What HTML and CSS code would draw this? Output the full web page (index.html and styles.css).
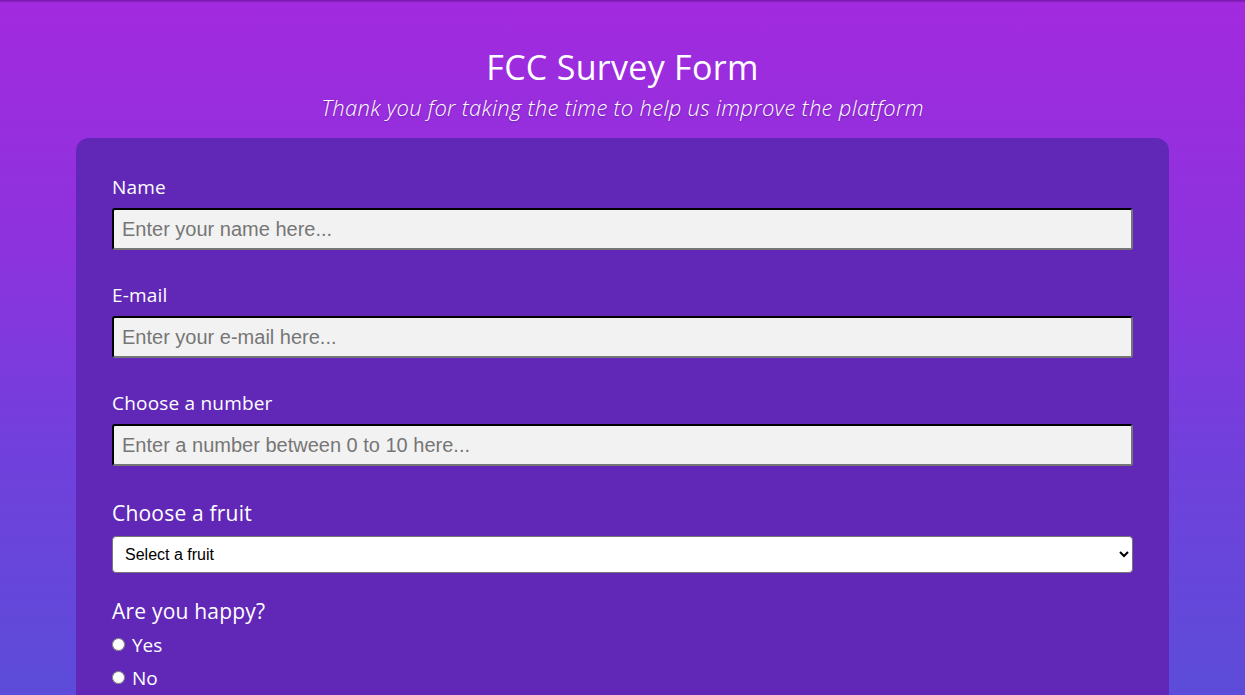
FILE: index.html
```html
<!DOCTYPE html>
<html lang="en">
<head>
<meta charset="utf-8">
<title>FCC Survey Form</title>
<link rel="stylesheet" href="styles.css">
</head>
<body>
<div class="topshadow"></div>
<header class="header">
  <h1 id="title" class="title">FCC Survey Form</h1>
  <p id="description" class="description">Thank you for taking the time to help us improve the platform</p>
</header>
<form id="survey-form" class="card">
  <div class="group">
    <label class="label" for="name">Name</label>
    <input class="field" id="name" type="text" placeholder="Enter your name here...">
  </div>
  <div class="group">
    <label class="label" for="email">E-mail</label>
    <input class="field" id="email" type="email" placeholder="Enter your e-mail here...">
  </div>
  <div class="group">
    <label class="label" for="number">Choose a number</label>
    <input class="field" id="number" type="text" placeholder="Enter a number between 0 to 10 here...">
  </div>
  <div class="group group-select">
    <label class="label label-big" for="fruit">Choose a fruit</label>
    <select class="dropdown" id="fruit">
      <option>Select a fruit</option>
      <option>Apple</option>
      <option>Banana</option>
    </select>
  </div>
  <div class="group">
    <p class="label label-big label-tight">Are you happy?</p>
    <label class="radio-row"><input class="radio" type="radio" name="happy" value="yes"><span>Yes</span></label>
    <label class="radio-row"><input class="radio" type="radio" name="happy" value="no"><span>No</span></label>
  </div>
</form>
</body>
</html>
```

FILE: styles.css
```css
html {
  background: #5c4cd9;
}
body {
  margin: 0;
  min-height: 100vh;
  font-family: "Open Sans", "Liberation Sans", sans-serif;
  color: #fff;
  background: linear-gradient(to bottom, #a22adf 0px, #8c33dd 250px, #7140dc 450px, #5c4cd9 695px, #5050d8 1000px);
  background-repeat: no-repeat;
  padding-bottom: 40px;
}
.topshadow {
  height: 3px;
  background: linear-gradient(to bottom, rgba(60, 0, 100, 0.45), rgba(60, 0, 100, 0));
}
.header {
  text-align: center;
  padding-top: 42px;
}
.title {
  margin: 0;
  font-size: 34px;
  font-weight: 400;
  line-height: 44px;
  letter-spacing: 0.3px;
}
.description {
  margin: 3px 0 0 0;
  font-size: 22px;
  font-style: italic;
  font-weight: 300;
  line-height: 30px;
  letter-spacing: 0.3px;
  text-shadow: 0 1px 2px rgba(40, 0, 80, 0.35);
}
.card {
  margin: 16px 76px 0 76px;
  background: #6128b8;
  border-radius: 13px;
  padding: 36px 36px 40px;
}
.group {
  display: flex;
  flex-direction: column;
  margin-bottom: 32px;
}
.group-select {
  margin-bottom: 23px;
}
.label {
  margin: 0 0 8px 0;
  font-size: 19px;
  line-height: 26px;
  font-weight: 500;
  letter-spacing: 0.2px;
}
.label-big {
  font-size: 21px;
  line-height: 30px;
}
.label-tight {
  margin-bottom: 2px;
}
.field {
  box-sizing: border-box;
  height: 42px;
  width: 100%;
  margin: 0;
  padding: 0 8px;
  border: 2px inset #767676;
  border-top-color: #1f1f1f;
  border-left-color: #1f1f1f;
  border-radius: 3px;
  background: #f2f2f2;
  font-family: "Liberation Sans", Arial, sans-serif;
  font-size: 20px;
  color: #222;
}
.field::placeholder {
  color: #767676;
}
.dropdown {
  box-sizing: border-box;
  height: 37px;
  width: 100%;
  margin: 0;
  padding: 0 8px;
  border: 1px solid #767676;
  border-radius: 4px;
  background: #fff;
  font-family: "Liberation Sans", Arial, sans-serif;
  font-size: 16px;
  color: #000;
}
.radio-row {
  display: flex;
  align-items: center;
  height: 33px;
  font-size: 19px;
  font-weight: 500;
  gap: 7px;
}
.radio {
  margin: 0;
  width: 13px;
  height: 13px;
}
```
